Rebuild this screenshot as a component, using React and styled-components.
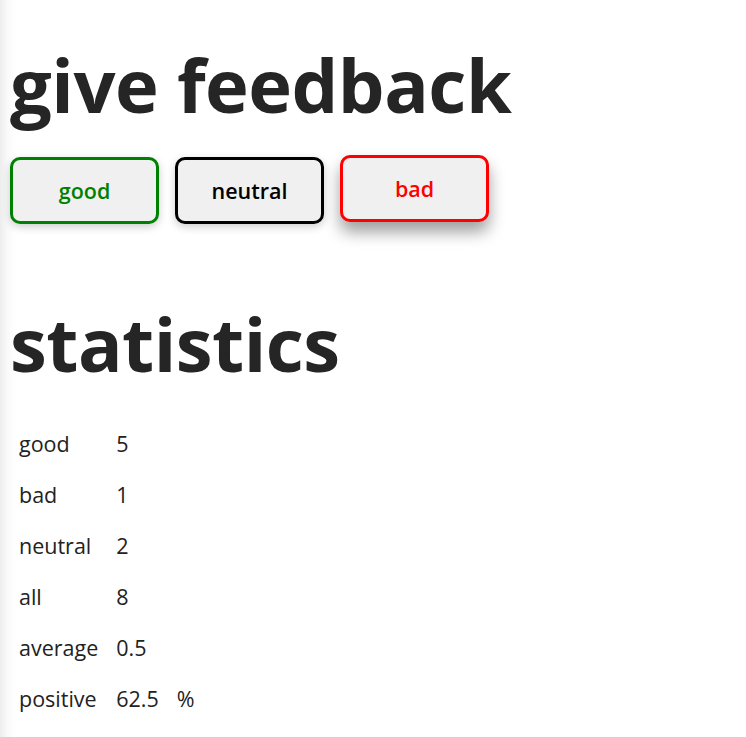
import React from "react";
import styled, { createGlobalStyle } from "styled-components";

const Global = createGlobalStyle`
  html, body { margin: 0; padding: 0; }
  body {
    font-family: "Open Sans", "Noto Sans", sans-serif;
    color: #222;
    background: linear-gradient(to right, #ededed 0px, #fafafa 8px, #ffffff 16px);
    min-height: 737px;
  }
`;

const Page = styled.div`
  padding: 0 10px;
`;

const Heading = styled.h1`
  font-size: 74px;
  font-weight: 700;
  line-height: 88px;
  margin: ${(p) => (p.$first ? "41px" : "0")} 0 ${(p) => p.$gap || "28px"};
  letter-spacing: -0.5px;
  color: #252525;
`;

const Buttons = styled.div`
  display: flex;
  gap: 16px;
  margin-bottom: 76px;
`;

const Button = styled.button`
  width: 149px;
  height: 67px;
  border: 3px solid ${(p) => p.$color};
  color: ${(p) => p.$color};
  border-radius: 10px;
  background: #f0f0f0;
  font-family: "Open Sans", "Noto Sans", sans-serif;
  font-size: 21.5px;
  font-weight: 600;
  cursor: pointer;
  box-shadow: ${(p) =>
    p.$raised ? "0 10px 16px rgba(0,0,0,0.38)" : "0 3px 8px rgba(0,0,0,0.2)"};
  transform: translateY(${(p) => (p.$raised ? "-2px" : "0")});
`;

const Table = styled.table`
  border-collapse: separate;
  border-spacing: 2px;
  font-size: 21.5px;
  color: #222;
`;

const Cell = styled.td`
  padding: 10.5px 8px;
  line-height: 28px;
  text-align: left;
  &:first-child { padding-left: 7px; }
`;

const stats = [
  ["good", "5"],
  ["bad", "1"],
  ["neutral", "2"],
  ["all", "8"],
  ["average", "0.5"],
  ["positive", "62.5", "%"],
];

export default function App() {
  return (
    <>
      <Global />
      <Page>
        <Heading $first>give feedback</Heading>
        <Buttons>
          <Button $color="green">good</Button>
          <Button $color="black">neutral</Button>
          <Button $color="red" $raised>bad</Button>
        </Buttons>
        <Heading $gap="29px">statistics</Heading>
        <Table>
          <tbody>
            {stats.map(([label, value, unit]) => (
              <tr key={label}>
                <Cell>{label}</Cell>
                <Cell>{value}</Cell>
                {unit && <Cell>{unit}</Cell>}
              </tr>
            ))}
          </tbody>
        </Table>
      </Page>
    </>
  );
}
